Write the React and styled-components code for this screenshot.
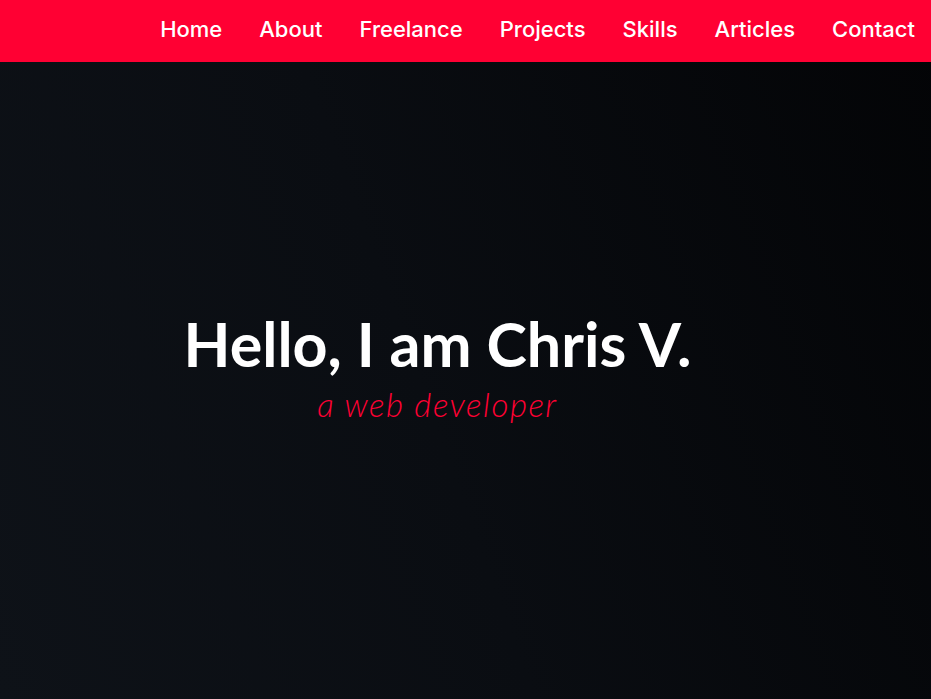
import React from 'react';
import styled, { createGlobalStyle } from 'styled-components';

const GlobalStyle = createGlobalStyle`
	html, body {
		margin: 0;
		padding: 0;
		height: 100%;
		background: #07090d;
	}
	#root {
		min-height: 100%;
	}
	* {
		box-sizing: border-box;
	}
`;

const Page = styled.div`
	min-height: 699px;
	display: flex;
	flex-direction: column;
	background: linear-gradient(70deg, #0e1218 0%, #0a0d12 45%, #030406 100%);
`;

const NavBar = styled.nav`
	height: 62px;
	background-color: #ff0033;
	display: flex;
	justify-content: flex-end;
	align-items: center;
	padding-right: 16px;
	padding-bottom: 5px;
`;

const NavList = styled.ul`
	list-style: none;
	margin: 0;
	padding: 0;
	display: flex;
	gap: 37px;
`;

const NavLink = styled.a`
	color: #ffffff;
	text-decoration: none;
	font-family: 'Inter', 'Open Sans', sans-serif;
	font-weight: 500;
	font-size: 22px;
	cursor: pointer;
`;

const Hero = styled.header`
	flex: 1;
	display: flex;
	flex-direction: column;
	align-items: center;
	justify-content: center;
	padding-right: 56px;
	padding-bottom: 30px;
`;

const Title = styled.h1`
	margin: 0;
	color: #ffffff;
	font-family: 'Lato', 'Open Sans', sans-serif;
	font-weight: 700;
	font-size: 61px;
	line-height: 1.2;
`;

const Subtitle = styled.p`
	margin: 5px 0 0;
	color: #ff0033;
	font-family: 'Lato', 'Open Sans', sans-serif;
	font-weight: 300;
	font-style: italic;
	font-size: 33px;
	line-height: 1.2;
	letter-spacing: 1.5px;
`;

const links = ['Home', 'About', 'Freelance', 'Projects', 'Skills', 'Articles', 'Contact'];

const App = () => {
	return (
		<>
			<GlobalStyle />
			<Page>
				<NavBar>
					<NavList>
						{links.map((el) => (
							<li key={el}>
								<NavLink>{el}</NavLink>
							</li>
						))}
					</NavList>
				</NavBar>
				<Hero>
					<Title>Hello, I am Chris V.</Title>
					<Subtitle>a web developer</Subtitle>
				</Hero>
			</Page>
		</>
	);
};

export default App;
